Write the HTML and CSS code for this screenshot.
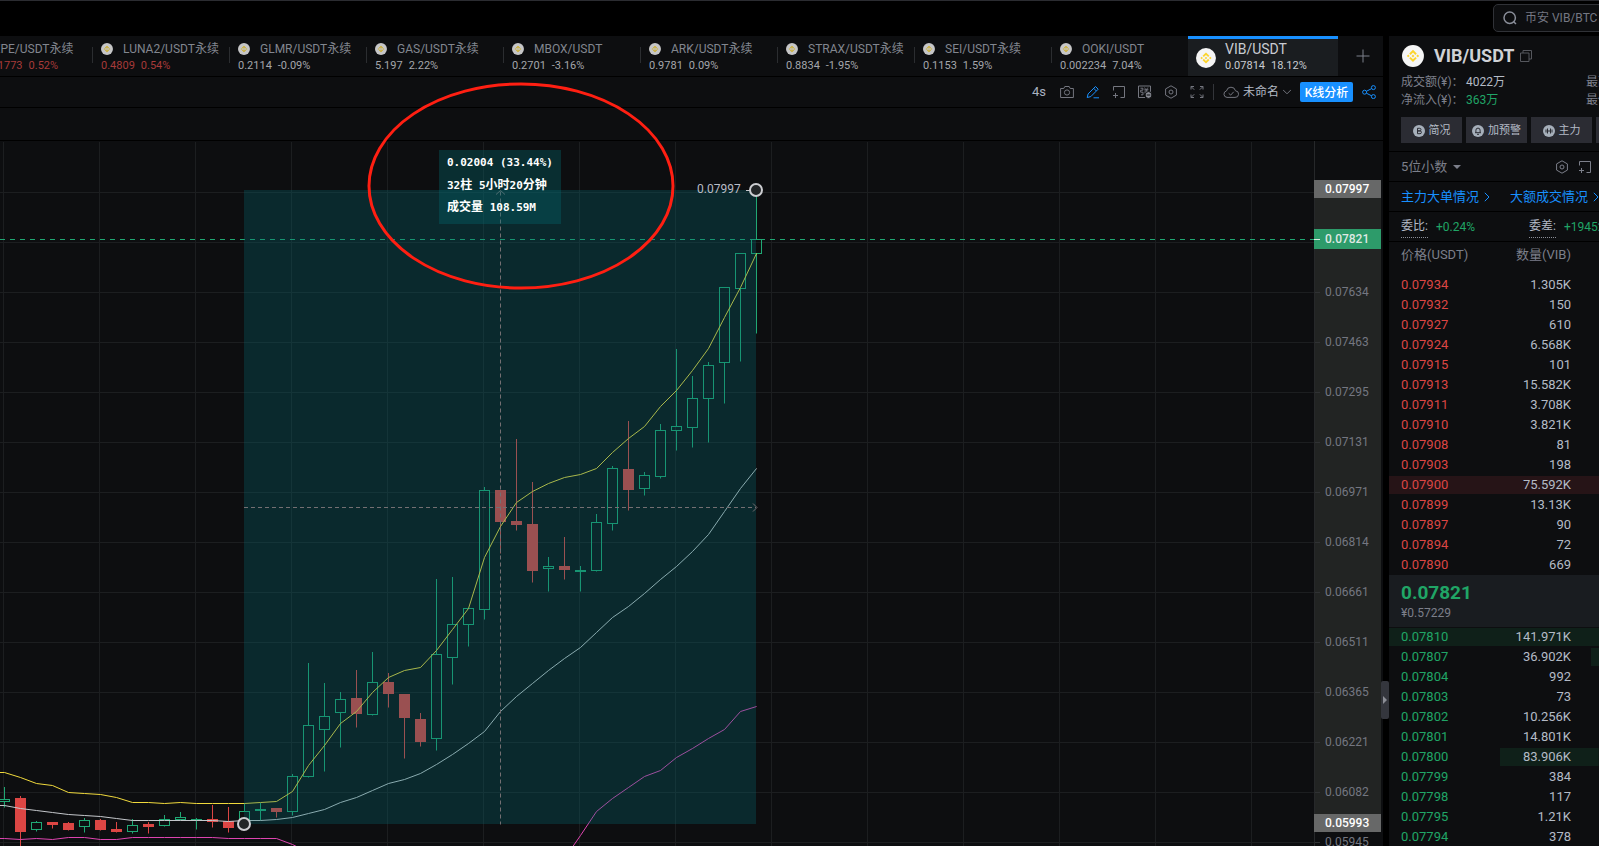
FILE: index.html
```html
<!DOCTYPE html>
<html lang="zh-CN">
<head>
    <meta charset="UTF-8">
    <meta name="viewport" content="width=device-width, initial-scale=1.0">
    <title>VIB/USDT</title>
    <link rel="stylesheet" href="styles.css">
</head>
<body>
    <svg class="sprite" aria-hidden="true">
        <symbol id="bnb" viewBox="-50 -50 227 227">
            <circle class="bnb__bg" cx="63.3" cy="63.3" r="113"/>
            <path class="bnb__mark" d="M38.73 53.2l24.59-24.58 24.6 24.6 14.3-14.31L63.32 0l-38.9 38.9zM0 63.31l14.3-14.31 14.31 14.31-14.31 14.3zM38.73 73.41L63.32 98l24.6-24.6 14.31 14.29-38.9 38.91-38.91-38.88zM98 63.31l14.3-14.31 14.31 14.3-14.31 14.32zM77.83 63.3L63.32 48.78 48.81 63.28l14.51 14.5z"/>
        </symbol>
        <symbol id="hex" viewBox="0 0 14 14">
            <path d="M7 .8l5.4 3.1v6.2L7 13.2l-5.4-3.1V3.9z"/>
            <circle cx="7" cy="7" r="2"/>
        </symbol>
        <symbol id="popout" viewBox="0 0 14 14">
            <path d="M1.5 5.5v-4h11v11h-4M1 10.5h5M3.5 8v5"/>
        </symbol>
    </svg>

    <header class="header">
        <label class="search">
            <svg class="icon search__icon" viewBox="0 0 14 14"><circle cx="6.7" cy="6.7" r="5.7"/><path d="M10.5 10.5l2.5 2.5"/></svg>
            <input class="search__input" type="text" aria-label="搜索" placeholder="币安 VIB/BTC">
        </label>
    </header>

    <div class="wrapper">
        <main class="market">
            <nav class="tabs">
                <a class="tab" href="#"><svg class="tab__logo"><use href="#bnb"/></svg><span class="tab__name">PEPE/USDT永续</span><span class="tab__price tab__price--red"><span>0.00001773</span><span>0.52%</span></span></a>
                <a class="tab" href="#"><svg class="tab__logo"><use href="#bnb"/></svg><span class="tab__name">LUNA2/USDT永续</span><span class="tab__price tab__price--red"><span>0.4809</span><span>0.54%</span></span></a>
                <a class="tab" href="#"><svg class="tab__logo"><use href="#bnb"/></svg><span class="tab__name">GLMR/USDT永续</span><span class="tab__price"><span>0.2114</span><span>-0.09%</span></span></a>
                <a class="tab" href="#"><svg class="tab__logo"><use href="#bnb"/></svg><span class="tab__name">GAS/USDT永续</span><span class="tab__price"><span>5.197</span><span>2.22%</span></span></a>
                <a class="tab" href="#"><svg class="tab__logo"><use href="#bnb"/></svg><span class="tab__name">MBOX/USDT</span><span class="tab__price"><span>0.2701</span><span>-3.16%</span></span></a>
                <a class="tab" href="#"><svg class="tab__logo"><use href="#bnb"/></svg><span class="tab__name">ARK/USDT永续</span><span class="tab__price"><span>0.9781</span><span>0.09%</span></span></a>
                <a class="tab" href="#"><svg class="tab__logo"><use href="#bnb"/></svg><span class="tab__name">STRAX/USDT永续</span><span class="tab__price"><span>0.8834</span><span>-1.95%</span></span></a>
                <a class="tab" href="#"><svg class="tab__logo"><use href="#bnb"/></svg><span class="tab__name">SEI/USDT永续</span><span class="tab__price"><span>0.1153</span><span>1.59%</span></span></a>
                <a class="tab" href="#"><svg class="tab__logo"><use href="#bnb"/></svg><span class="tab__name">OOKI/USDT</span><span class="tab__price"><span>0.002234</span><span>7.04%</span></span></a>
                <a class="tab tab--active" href="#"><svg class="tab__logo"><use href="#bnb"/></svg><span class="tab__name">VIB/USDT</span><span class="tab__price"><span>0.07814</span><span>18.12%</span></span></a>
                <button class="tabs__add" type="button" aria-label="添加">
                    <svg class="icon" viewBox="0 0 14 14"><path d="M7 .5v13M.5 7h13"/></svg>
                </button>
            </nav>

            <div class="toolbar">
                <span class="toolbar__timer">4s</span>
                <button class="tool" type="button" aria-label="截图">
                    <svg class="icon" viewBox="0 0 14 14"><path d="M.6 3.5h3.2l1-2h4.4l1 2h3.2v9H.6z"/><circle cx="7" cy="7.5" r="2.6"/></svg>
                </button>
                <button class="tool tool--blue" type="button" aria-label="画线">
                    <svg class="icon" viewBox="0 0 14 14"><path d="M1.2 12.5l.9-3.6L9.5 1.5l2.7 2.7-7.4 7.4zM7.7 3.3L10.4 6M7.5 12.8h5.5"/></svg>
                </button>
                <button class="tool" type="button" aria-label="弹出">
                    <svg class="icon"><use href="#popout"/></svg>
                </button>
                <button class="tool" type="button" aria-label="弹幕">
                    <svg class="icon" viewBox="0 0 14 14"><path d="M7 12.5H.5V1h12v6M2.5 3.2h2.4v2H2.7v2h2.3v2.6H3M6.6 2.6l.6 1M9.9 2.6l-.6 1M6.4 4.3h4M6.4 6h3.8M6.4 7.8h2M8.3 4v5"/><circle class="icon__dot" cx="10.5" cy="10" r="3.4"/><path class="icon__minus" d="M8.7 10h3.6"/></svg>
                </button>
                <button class="tool" type="button" aria-label="设置">
                    <svg class="icon"><use href="#hex"/></svg>
                </button>
                <button class="tool" type="button" aria-label="全屏">
                    <svg class="icon" viewBox="0 0 14 14"><path d="M1 4.5V1.5h3M1.2 1.7l3 3M10 1.5h3v3M12.8 1.7l-3 3M1 9.5v3h3M1.2 12.3l3-3M13 9.5v3h-3M12.8 12.3l-3-3"/></svg>
                </button>
                <span class="toolbar__line"></span>
                <button class="layout" type="button">
                    <svg class="icon layout__cloud" viewBox="0 0 16 14"><path d="M4 12.4a3.3 3.3 0 0 1-.5-6.5 4.6 4.6 0 0 1 9-.1 3.3 3.3 0 0 1-.5 6.6zM5.7 8.3l2 1.8 3-3.3"/></svg>
                    未命名
                    <svg class="icon layout__arrow" viewBox="0 0 8 6"><path d="M0 .8l4 4 4-4"/></svg>
                </button>
                <button class="analyse" type="button">K线分析</button>
                <button class="tool tool--blue" type="button" aria-label="分享">
                    <svg class="icon" viewBox="0 0 14 14"><circle cx="2.6" cy="7.2" r="2"/><circle cx="11.4" cy="2.6" r="2"/><circle cx="11.4" cy="11.6" r="2"/><path d="M4.4 6.3l5.2-2.7M4.4 8.2l5.2 2.6"/></svg>
                </button>
            </div>
            <div class="subbar"></div>

            <div class="chart">
                <svg class="plot" id="plot"></svg>
                <div class="axis">
                    <div class="axis__range"></div>
                    <span class="axis__label">0.07634</span>
                    <span class="axis__label">0.07463</span>
                    <span class="axis__label">0.07295</span>
                    <span class="axis__label">0.07131</span>
                    <span class="axis__label">0.06971</span>
                    <span class="axis__label">0.06814</span>
                    <span class="axis__label">0.06661</span>
                    <span class="axis__label">0.06511</span>
                    <span class="axis__label">0.06365</span>
                    <span class="axis__label">0.06221</span>
                    <span class="axis__label">0.06082</span>
                    <span class="axis__label">0.05945</span>
                    <span class="axis__tag axis__tag--high">0.07997</span>
                    <span class="axis__tag axis__tag--last">0.07821</span>
                    <span class="axis__tag axis__tag--low">0.05993</span>
                </div>
                <div class="measure">
                    <p>0.02004 (33.44%)</p>
                    <p>32<span>柱</span> 5<span>小时</span>20<span>分钟</span></p>
                    <p><span>成交量</span> 108.59M</p>
                </div>
            </div>

            <svg class="mark"><ellipse cx="154" cy="104" rx="152" ry="102"/></svg>
            <button class="fold" type="button" aria-label="收起"></button>
        </main>

        <aside class="side">
            <div class="coin">
                <svg class="coin__logo"><use href="#bnb"/></svg>
                <h1 class="coin__name">VIB/USDT</h1>
                <svg class="icon coin__copy" viewBox="0 0 12 12"><path d="M.5 3h8.500v8.500H.5zM3 3V.5h8.500V9H9"/></svg>
            </div>
            <div class="stats">
                <p class="stats__row"><span class="stats__key">成交额(¥)：</span><span class="stats__value">4022万</span><span class="stats__more">最高(¥)</span></p>
                <p class="stats__row"><span class="stats__key">净流入(¥)：</span><span class="stats__value green">363万</span><span class="stats__more">最低(¥)</span></p>
            </div>
            <div class="actions">
                <button class="action" type="button"><svg class="action__icon" viewBox="0 0 12 12"><circle cx="6" cy="6" r="6"/><path d="M4.500 3.300h2.200a1.300 1.300 0 0 1 0 2.600H4.500zM4.500 5.900h2.500a1.400 1.400 0 0 1 0 2.800H4.500z"/></svg>简况</button>
                <button class="action" type="button"><svg class="action__icon" viewBox="0 0 12 12"><circle cx="6" cy="6" r="6"/><path d="M3 7.700h6M3.900 7.500V5.200a2.100 2.100 0 0 1 4.200 0v2.300M5 9.300h2"/></svg>加预警</button>
                <button class="action" type="button"><svg class="action__icon" viewBox="0 0 12 12"><circle cx="6" cy="6" r="6"/><path d="M4.500 3.500v5M7.500 3.500v5M3 4.500v3M9 4.500v3M4.500 6h3"/></svg>主力</button>
                <button class="action" type="button" aria-label="更多"></button>
            </div>
            <div class="row row--tools">
                <button class="digits" type="button">5位小数<span class="digits__caret"></span></button>
                <svg class="icon"><use href="#hex"/></svg>
                <svg class="icon"><use href="#popout"/></svg>
            </div>
            <div class="row row--links">
                <a class="link" href="#">主力大单情况<svg class="icon" viewBox="0 0 6 10"><path d="M.8.8L5 5 .8 9.200"/></svg></a>
                <a class="link" href="#">大额成交情况<svg class="icon" viewBox="0 0 6 10"><path d="M.8.8L5 5 .8 9.200"/></svg></a>
            </div>
            <div class="row row--ratio">
                <p class="ratio"><span class="ratio__key">委比:</span><span class="green">+0.24%</span></p>
                <p class="ratio"><span class="ratio__key">委差:</span><span class="green">+19452</span></p>
            </div>
            <table class="book">
                <thead>
                    <tr><th>价格(USDT)</th><th>数量(VIB)</th></tr>
                </thead>
                <tbody class="book__asks" id="asks"></tbody>
                <tbody>
                    <tr>
                        <td class="last" colspan="2">
                            <strong class="last__price">0.07821</strong>
                            <span class="last__cny">¥0.57229</span>
                        </td>
                    </tr>
                </tbody>
                <tbody class="book__bids" id="bids"></tbody>
            </table>
        </aside>
    </div>

    <script src="chart.js"></script>
</body>
</html>
```

FILE: styles.css
```css
* {
    box-sizing: border-box;
    margin: 0;
    padding: 0;
}

body {
    height: 100vh;
    display: flex;
    flex-direction: column;
    overflow: hidden;
    background: #000;
    color: #b4bbc6;
    font-family: Roboto, "Noto Sans CJK SC", sans-serif;
    font-size: 12px;
    line-height: 16px;
}

button {
    border: none;
    background: none;
    color: inherit;
    font: inherit;
    cursor: pointer;
}

a {
    text-decoration: none;
}

.sprite {
    display: none;
}

.icon {
    display: block;
    flex: none;
    width: 14px;
    height: 14px;
    fill: none;
    stroke: currentColor;
    stroke-width: 1;
}

.icon__dot {
    fill: #8a8c95;
    stroke: #0d0e10;
}

.icon__minus {
    stroke: #0d0e10;
}

.bnb__bg {
    fill: #f5f5f5;
}

.bnb__mark {
    fill: #fcd42c;
}

.green {
    color: #20a566;
}

/* header */

.header {
    flex: none;
    height: 36px;
    display: flex;
    justify-content: flex-end;
    padding-top: 3px;
    border-top: 1px solid #2b2c31;
    overflow: hidden;
}

.search {
    flex: none;
    width: 160px;
    height: 28px;
    margin-right: -54px;
    display: flex;
    align-items: center;
    gap: 8px;
    padding-left: 9px;
    border: 1px solid #303237;
    border-radius: 5px;
    background: #0d0e10;
    color: #8a8e99;
}

.search__icon {
    stroke-width: 1.5;
}

.search__input {
    width: 100px;
    border: none;
    outline: none;
    background: none;
    color: inherit;
    font: inherit;
}

.search__input::placeholder {
    color: #747782;
}

/* panels */

.wrapper {
    flex: 1;
    min-height: 0;
    display: flex;
    gap: 6px;
}

.market {
    position: relative;
    flex: 1;
    min-width: 0;
    display: flex;
    flex-direction: column;
    background: #0d0e10;
}

.tabs {
    flex: none;
    height: 41px;
    display: flex;
    justify-content: flex-end;
    overflow: hidden;
    border-bottom: 1px solid #000;
}

.tab {
    position: relative;
    flex: none;
    width: 137px;
    display: grid;
    grid-template-columns: 12px 1fr;
    grid-template-rows: 16px 16px;
    column-gap: 10px;
    row-gap: 1px;
    align-items: center;
    padding: 5px 0 0 9px;
    color: #82868f;
    white-space: nowrap;
}

.tab::before {
    content: "";
    position: absolute;
    left: 0;
    top: 11px;
    width: 1px;
    height: 16px;
    background: #2b2d30;
}

.tab__logo {
    width: 12px;
    height: 12px;
    opacity: .8;
}

.tab__price {
    grid-column: 1 / -1;
    display: flex;
    gap: 6px;
    color: #a4a6ab;
    font-size: 11px;
}

.tab__price--red {
    color: #a73a39;
}

.tab--active {
    width: 150px;
    grid-template-columns: 20px 1fr;
    padding: 2px 0 0 8px;
    column-gap: 9px;
    border-top: 3px solid #1890ff;
    background: #1a1d20;
    color: #c9ccd2;
    font-size: 14px;
}

.tab--active::before {
    content: none;
}

.tab--active .tab__logo {
    grid-row: 1 / 3;
    width: 20px;
    height: 20px;
    opacity: 1;
}

.tab--active .tab__price {
    grid-column: 2;
    color: #c9ccd2;
}

.tabs__add {
    flex: none;
    width: 45px;
    padding-left: 18px;
    color: #7d808b;
}

.toolbar {
    flex: none;
    height: 31px;
    display: flex;
    align-items: center;
    justify-content: flex-end;
    gap: 12px;
    padding-right: 7px;
    border-bottom: 1px solid #000;
    color: #74767f;
}

.toolbar__timer {
    margin-right: 2px;
    color: #a9b2c0;
    font-size: 13px;
}

.tool--blue {
    color: #1890ff;
}

.toolbar__line {
    width: 1px;
    height: 16px;
    margin: 0 -3px;
    background: #33353a;
}

.layout {
    display: flex;
    align-items: center;
    gap: 4px;
    color: #b4bbc6;
}

.layout__cloud {
    width: 16px;
    color: #74767f;
}

.layout__arrow {
    width: 8px;
    height: 6px;
    color: #74767f;
}

.analyse {
    width: 53px;
    height: 20px;
    margin: 0 -3px;
    padding-top: 1px;
    border-radius: 2px;
    background: #1890ff;
    color: #fff;
    font-weight: 500;
}

.subbar {
    flex: none;
    height: 33px;
    border-bottom: 1px solid #000;
}

/* chart */

.chart {
    position: relative;
    flex: 1;
    min-height: 0;
    display: flex;
    overflow: hidden;
}

.plot {
    flex: 1;
    min-width: 0;
    height: 100%;
}

.grid {
    stroke: #1c1e20;
}

.candle--up {
    stroke: #20a874;
    fill: none;
}

.candle--down {
    stroke: #dc4644;
    fill: #dc4644;
}

.line {
    fill: none;
}

.line--yellow {
    stroke: #f0d93c;
}

.line--white {
    stroke: #c4c7cb;
}

.line--pink {
    stroke: #de44b0;
}

.area {
    fill: rgba(3, 107, 113, .3);
}

.guide {
    fill: none;
    stroke: #746f72;
}

.guide--dashed {
    stroke-dasharray: 4 3;
}

.last-line {
    stroke: #20a874;
    stroke-dasharray: 5 5;
}

.handle {
    fill: #222527;
    stroke: #cccdd1;
    stroke-width: 2;
}

.peak {
    fill: #b8bcc6;
    font-size: 12px;
}

.axis {
    position: relative;
    flex: none;
    width: 69px;
    display: flex;
    flex-direction: column;
    padding-top: 126px;
    border-left: 1px solid #26282a;
    color: #747781;
}

.axis__range {
    position: absolute;
    top: 48px;
    left: 0;
    right: 2px;
    height: 634px;
    background: #222423;
}

.axis__label {
    position: relative;
    flex: none;
    height: 50px;
    padding-left: 10px;
    line-height: 50px;
}

.axis__label::before {
    content: "";
    position: absolute;
    left: 0;
    top: 25px;
    width: 5px;
    height: 1px;
    background: #303234;
}

.axis__tag {
    position: absolute;
    left: -1px;
    right: 2px;
    height: 18px;
    padding-left: 11px;
    background: #676868;
    color: #fff;
    font-weight: 500;
    line-height: 19px;
}

.axis__tag--high {
    top: 39px;
}

.axis__tag--last {
    top: 88px;
    height: 20px;
    background: #2d9b6a;
    color: #dfe8e3;
    line-height: 20px;
}

.axis__tag--last::before {
    content: "";
    position: absolute;
    left: 0;
    top: 10px;
    width: 6px;
    height: 1px;
    background: #dfe8e3;
}

.axis__tag--low {
    top: 673px;
}

.measure {
    position: absolute;
    left: 439px;
    top: 9px;
    width: 122px;
    height: 74px;
    padding: 3px 8px;
    background: rgba(3, 107, 113, .35);
    color: #fff;
    font-family: "DejaVu Sans Mono", "Noto Sans CJK SC", monospace;
    font-size: 11px;
    font-weight: bold;
    line-height: 20px;
    white-space: nowrap;
}

.measure p {
    height: 22px;
}

.measure span {
    font-size: 12px;
}

.mark {
    position: absolute;
    left: 367px;
    top: 46px;
    width: 308px;
    height: 208px;
    fill: none;
    stroke: #ff1f12;
    stroke-width: 3;
    pointer-events: none;
}

.fold {
    position: absolute;
    right: -6px;
    top: 645px;
    width: 8px;
    height: 38px;
    padding-left: 2px;
    border-radius: 2px;
    background: #34363d;
}

.fold::before {
    content: "";
    display: block;
    border: 4px solid transparent;
    border-left-color: #8c8e96;
    border-right: none;
}

/* side panel */

.side {
    flex: none;
    width: 210px;
    overflow: hidden;
    background: #0d0e10;
}

.coin {
    height: 37px;
    display: flex;
    align-items: center;
    padding: 3px 0 0 13px;
}

.coin__logo {
    width: 22px;
    height: 22px;
}

.coin__name {
    margin: 0 6px 0 10px;
    color: #d0d2d6;
    font-size: 18px;
    font-weight: 700;
    line-height: 24px;
}

.coin__copy {
    width: 12px;
    height: 12px;
    color: #55575d;
}

.stats {
    padding-left: 12px;
}

.stats__row {
    height: 18px;
    display: flex;
    line-height: 18px;
    white-space: nowrap;
}

.stats__key {
    flex: none;
    width: 65px;
    color: #7c7f8a;
}

.stats__value {
    flex: none;
    width: 120px;
}

.stats__more {
    color: #7c7f8a;
}

.actions {
    height: 42px;
    display: flex;
    gap: 4px;
    padding: 8px 0 8px 12px;
}

.action {
    flex: none;
    width: 61px;
    display: flex;
    align-items: center;
    justify-content: center;
    gap: 4px;
    padding-top: 1px;
    background: #2b2c33;
    font-size: 11px;
}

.action__icon {
    width: 12px;
    height: 12px;
    fill: #a6afba;
}

.action__icon path {
    fill: none;
    stroke: #2b2c33;
}

.row {
    height: 30px;
    display: flex;
    align-items: center;
    padding-left: 12px;
    border-top: 1px solid #000;
    white-space: nowrap;
}

.row--tools {
    gap: 9px;
    padding-right: 7px;
    color: #7c7f8a;
}

.digits {
    display: flex;
    align-items: center;
    gap: 6px;
    margin-right: auto;
    font-size: 13px;
}

.digits__caret {
    border: 4px solid transparent;
    border-top-color: #7c7f8a;
    border-bottom: none;
}

.row--links {
    gap: 20px;
}

.link {
    display: flex;
    align-items: center;
    gap: 5px;
    color: #1890ff;
    font-size: 13px;
}

.link .icon {
    width: 6px;
    height: 10px;
}

.ratio {
    flex: none;
    width: 128px;
    display: flex;
    gap: 8px;
    align-items: center;
}

.ratio__key {
    height: 22px;
    line-height: 20px;
    border-bottom: 1px dotted #8b8e97;
}

.book {
    width: 100%;
    border-collapse: collapse;
    table-layout: fixed;
    border-top: 1px solid #000;
    font-size: 13px;
}

.book th {
    height: 33px;
    padding: 0 0 6px 12px;
    color: #7c7f8a;
    font-weight: 400;
    text-align: left;
}

.book td {
    height: 20px;
    padding: 0 0 0 12px;
    line-height: 20px;
}

.book th:last-child,
.book td:last-child {
    text-align: right;
    padding-right: 28px;
}

.book__asks tr,
.book__bids tr {
    background: linear-gradient(#261417, #261417) right center / var(--depth, 0%) 18px no-repeat;
}

.book__bids tr {
    background-image: linear-gradient(#0f2019, #0f2019);
}

.book__asks td:first-child {
    color: #dc4644;
}

.book__bids td:first-child {
    color: #20a566;
}

.book .last:last-child {
    height: 52px;
    background: #191c20;
    text-align: left;
}

.last__price {
    display: block;
    color: #20a566;
    font-size: 19px;
    line-height: 24px;
}

.last__cny {
    display: block;
    color: #7c7f8a;
    font-size: 12px;
    line-height: 16px;
}
```

FILE: chart.js
```js
const plot = document.querySelector('#plot')
const NS = 'http://www.w3.org/2000/svg'
const OFFSET = 141
const STEP = 16

// [up, high, body top, body bottom, low]
const candles = [
    [1, 787, 799, 802, 807], [0, 796, 798, 832, 860], [1, 821, 822, 830, 831], [0, 822, 822, 825, 828],
    [0, 822, 823, 830, 830], [1, 818, 820, 827, 832], [0, 819, 820, 830, 830], [0, 822, 829, 832, 832],
    [1, 819, 825, 832, 833], [0, 822, 824, 827, 833], [1, 815, 819, 826, 826], [1, 812, 817, 820, 820],
    [1, 818, 819, 821, 829], [0, 805, 819, 822, 827], [0, 807, 821, 828, 832], [1, 803, 811, 820, 824],
    [1, 803, 809, 811, 820], [0, 808, 808, 812, 817], [1, 774, 776, 812, 815], [1, 663, 725, 777, 777],
    [1, 683, 716, 730, 771], [1, 692, 699, 713, 747], [0, 670, 698, 714, 727], [1, 652, 682, 715, 715],
    [0, 673, 682, 694, 707], [0, 694, 694, 718, 758], [0, 713, 719, 742, 746], [1, 579, 654, 739, 750],
    [1, 577, 624, 658, 684], [1, 608, 608, 625, 646], [1, 487, 490, 610, 619], [0, 490, 490, 522, 553],
    [0, 439, 521, 525, 530], [0, 482, 524, 571, 582], [1, 557, 566, 569, 591], [0, 537, 566, 570, 579],
    [1, 566, 570, 572, 591], [1, 514, 522, 571, 571], [1, 466, 468, 524, 530], [0, 421, 469, 490, 510],
    [1, 472, 475, 489, 495], [1, 424, 430, 477, 478], [1, 349, 426, 431, 450], [1, 376, 398, 428, 447],
    [1, 362, 365, 399, 442], [1, 287, 287, 363, 403], [1, 253, 253, 289, 361], [1, 190, 239, 254, 333]
]

const yellow = [772, 777, 783, 785, 792, 793, 794, 797, 802, 802, 803, 802, 803, 803, 803, 803, 802, 801, 791, 765, 745, 723, 711, 692, 677, 670, 667, 650, 629, 608, 557, 526, 502, 491, 483, 477, 474, 468, 452, 438, 426, 406, 390, 370, 348, 317, 287, 253]
const white = [805, 808, 810, 812, 814, 815, 816, 818, 820, 820, 820, 820, 820, 820, 821, 820, 820, 819, 817, 813, 809, 802, 797, 790, 783, 779, 773, 764, 754, 743, 731, 711, 696, 683, 670, 658, 647, 632, 617, 606, 593, 579, 566, 551, 534, 511, 488, 468]
const pink = [838, 839, 838, 839, 837, 837, 839, 839, 837, 837, 837, 837, 837, 837, 838, 838, 838, 838, 844, 852, 870, 890, 900, 910, 915, 920, 920, 920, 915, 910, 905, 900, 895, 885, 875, 858, 835, 811, 798, 787, 776, 770, 757, 748, 738, 729, 711, 706]

const add = (tag, className, attrs) => {
    const el = document.createElementNS(NS, tag)
    el.setAttribute('class', className)
    for (const key in attrs) el.setAttribute(key, attrs[key])
    plot.appendChild(el)
    return el
}

const path = (className, d) => add('path', className, { d })
const y = (value) => value - OFFSET + 0.5
const x = (i) => 4.5 + i * STEP

// grid
for (let gy = 192; gy < 1600; gy += 50) path('grid', `M0 ${y(gy)}H4000`)
for (let gx = 3.5; gx < 4000; gx += 96) path('grid', `M${gx} 1V2000`)

candles.forEach(([up, high, top, bottom, low], i) => {
    const name = up ? 'candle--up' : 'candle--down'
    path(name, `M${x(i)} ${y(high) - 0.5}V${y(top)}M${x(i)} ${y(bottom) - 1}V${y(low)}`)
    add('rect', name, { x: x(i) - 5, y: y(top), width: 10, height: bottom - top - 1 })
})

const drawLine = (className, values) => {
    path('line ' + className, 'M0 ' + y(values[0]) + values.map((v, i) => `L${x(i)} ${y(v)}`).join(''))
}
drawLine('line--pink', pink)
drawLine('line--white', white)
drawLine('line--yellow', yellow)

path('last-line', `M0 ${y(239)}H4000`)

// measured range
add('rect', 'area', { x: 244, y: 49, width: 512, height: 634 })
path('guide guide--dashed', `M500.5 ${y(191)}V${y(824)}M244 ${y(507)}H756`)
path('guide', `M496 ${y(194)}L500.5 ${y(190)}L505 ${y(194)}M753 ${y(503)}L757 ${y(507)}L753 ${y(511)}`)

add('text', 'peak', { x: 697, y: 52 }).textContent = '0.07997'
path('line line--white', `M746 ${y(190)}H750`)
add('circle', 'handle', { cx: 756, cy: 49, r: 6 })
add('circle', 'handle', { cx: 244, cy: 683, r: 6 })

// order book: [price, amount, depth %]
const asks = [
    ['0.07934', '1.305K'], ['0.07932', '150'], ['0.07927', '610'], ['0.07924', '6.568K'], ['0.07915', '101'],
    ['0.07913', '15.582K'], ['0.07911', '3.708K'], ['0.07910', '3.821K'], ['0.07908', '81'], ['0.07903', '198'],
    ['0.07900', '75.592K', 100], ['0.07899', '13.13K'], ['0.07897', '90'], ['0.07894', '72'], ['0.07890', '669']
]
const bids = [
    ['0.07810', '141.971K', 100], ['0.07807', '36.902K', 4], ['0.07804', '992'], ['0.07803', '73'],
    ['0.07802', '10.256K'], ['0.07801', '14.801K'], ['0.07800', '83.906K', 47], ['0.07799', '384'],
    ['0.07798', '117'], ['0.07795', '1.21K'], ['0.07794', '378']
]

const fill = (selector, rows) => {
    document.querySelector(selector).innerHTML = rows.map(([price, amount, depth]) =>
        `<tr style="--depth: ${depth || 0}%"><td>${price}</td><td>${amount}</td></tr>`
    ).join('')
}
fill('#asks', asks)
fill('#bids', bids)
```
